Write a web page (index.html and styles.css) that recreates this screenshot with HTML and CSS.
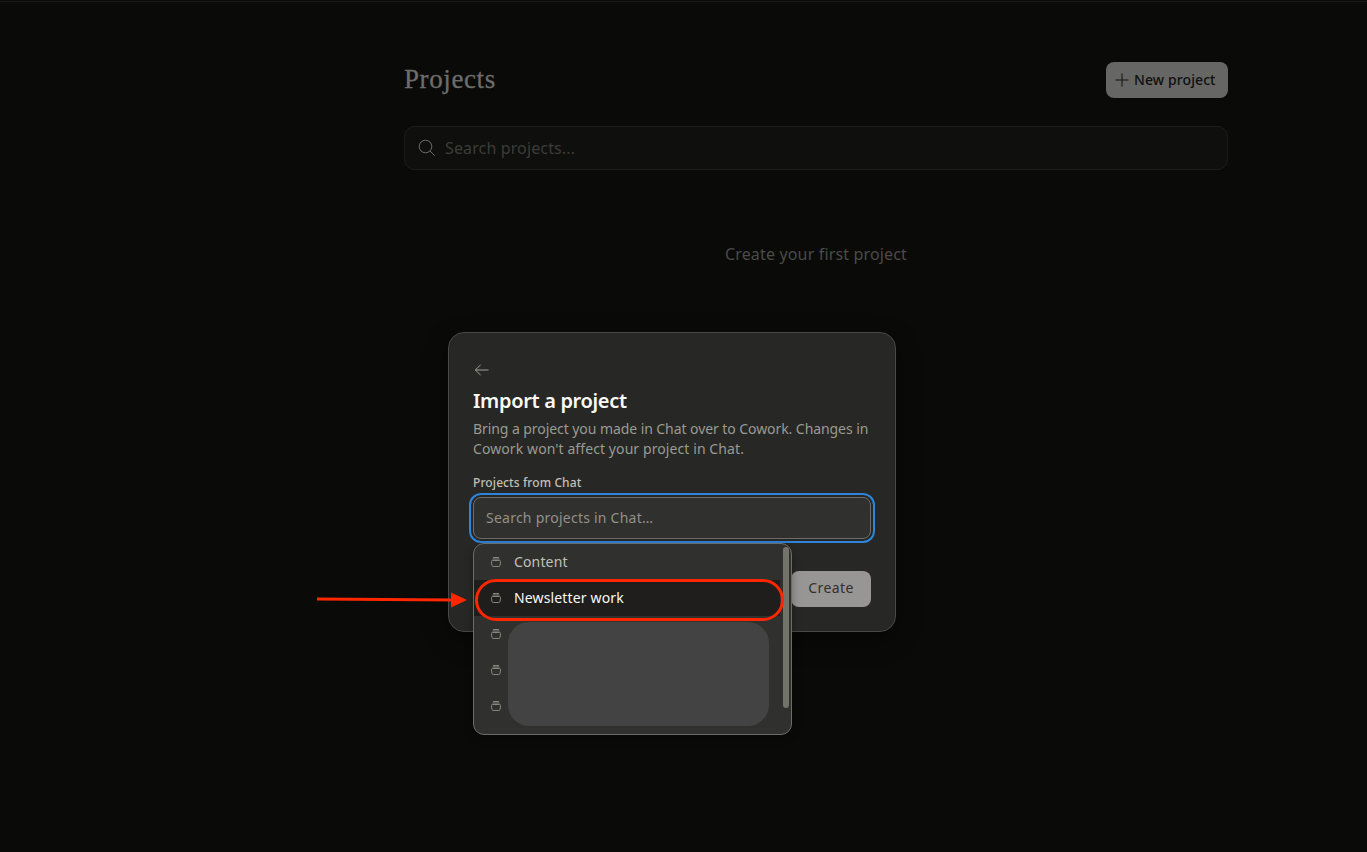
FILE: index.html
```html
<!DOCTYPE html>
<html lang="en">
<head>
  <meta charset="UTF-8" />
  <meta name="viewport" content="width=device-width, initial-scale=1.0"/>
  <title>Projects</title>
  <link rel="stylesheet" href="styles.css">
</head>
<body>
  <svg class="sprite" width="0" height="0">
    <symbol id="icon-project" viewBox="0 0 12 12">
      <path d="M3 1.5h6M2.5 3h7M2.5 4.5h7q1.1 0 1 1.1l-.4 3.6q-.1 1.3-1.4 1.3H3.3q-1.3 0-1.4-1.3l-.4-3.6q-.1-1.1 1-1.1z" />
    </symbol>
  </svg>

  <div class="topline"></div>
  <main class="page">
    <div class="page-header">
      <h1>Projects</h1>
      <button class="new-project">
        <svg width="14" height="14" viewBox="0 0 14 14"><path d="M7 .5v13M.5 7h13" /></svg>
        <span>New project</span>
      </button>
    </div>
    <div class="search">
      <svg width="18" height="18" viewBox="0 0 18 18"><circle cx="7.5" cy="7.5" r="6.3" /><path d="M12 12l4.8 4.8" /></svg>
      <span>Search projects...</span>
    </div>
    <p class="empty">Create your first project</p>
  </main>

  <div class="overlay">
    <div class="modal">
      <button class="back">
        <svg width="16" height="14" viewBox="0 0 16 14"><path d="M15.5 7H2.5M7.7 1.7L2.4 7L7.7 12.3" /></svg>
      </button>
      <h2>Import a project</h2>
      <p class="description"><span class="tight">Bring a project you made in Chat over to Cowork. Changes in</span><br><span class="loose">Cowork won't affect your project in Chat.</span></p>
      <div class="label">Projects from Chat</div>
      <div class="field">
        <div class="input">Search projects in Chat…</div>
        <div class="dropdown">
          <ul>
            <li><svg><use href="#icon-project" /></svg><span>Content</span></li>
            <li class="active"><svg><use href="#icon-project" /></svg><span>Newsletter work</span></li>
            <li><svg><use href="#icon-project" /></svg></li>
            <li><svg><use href="#icon-project" /></svg></li>
            <li><svg><use href="#icon-project" /></svg></li>
          </ul>
          <div class="scrollbar"></div>
          <div class="redacted"></div>
          <div class="highlight"></div>
        </div>
        <svg class="arrow" width="152" height="18" viewBox="0 0 152 18"><path class="shaft" d="M1 8L138 9" /><path class="head" d="M135 1.5L151 9L135 16.5z" /></svg>
      </div>
      <div class="actions">
        <button class="create">Create</button>
      </div>
    </div>
  </div>
</body>
</html>
```

FILE: styles.css
```css
:root {
  --bg: #0a0a08;
  --panel: #272725;
  --field: #30302e;
  --line: #6c6c68;
  --red: #ff2600;
}

* {
  box-sizing: border-box;
}

body {
  margin: 0;
  height: 852px;
  overflow: hidden;
  position: relative;
  background: var(--bg);
  font-family: "Noto Sans", sans-serif;
}

h1, h2, p, ul {
  margin: 0;
  padding: 0;
}

button {
  border: none;
  padding: 0;
  font-family: inherit;
}

svg {
  fill: none;
  stroke: currentColor;
  flex-shrink: 0;
}

.sprite {
  position: absolute;
}

.topline {
  height: 2px;
  border-bottom: 1px solid #1b1b19;
}

.page {
  width: 824px;
  margin-left: 404px;
  padding-top: 60px;
}

.page-header {
  display: flex;
  justify-content: space-between;
  align-items: center;
  height: 36px;
}

h1 {
  font-family: "Liberation Serif", serif;
  font-size: 27px;
  font-weight: 400;
  letter-spacing: 0.6px;
  line-height: 34px;
  padding-bottom: 2px;
  color: #6d6d6a;
  -webkit-text-stroke: 0.3px #6d6d6a;
}

.new-project {
  display: flex;
  align-items: center;
  gap: 5px;
  width: 122px;
  height: 36px;
  padding-left: 9px;
  border-radius: 8px;
  background: #666664;
  color: #10100f;
  font-size: 14px;
  font-weight: 500;
  letter-spacing: 0.1px;
  white-space: nowrap;
}

.new-project span {
  padding-bottom: 2px;
}

.search {
  display: flex;
  align-items: center;
  gap: 9px;
  height: 44px;
  margin-top: 28px;
  padding-left: 13px;
  border: 1px solid #1b1b19;
  border-radius: 10px;
  background: #0f0f0d;
  color: #3c3c39;
  font-size: 16px;
  letter-spacing: 0.13px;
}

.search svg {
  color: #6d6d69;
}

.empty {
  margin-top: 72px;
  text-align: center;
  font-size: 16px;
  line-height: 24px;
  letter-spacing: 0.16px;
  color: #4b4b48;
}

.overlay {
  position: absolute;
  top: 0;
  left: 0;
  padding: 332px 0 0 448px;
}

.modal {
  width: 448px;
  height: 300px;
  padding: 30px 24px 24px;
  border: 1px solid #484846;
  border-radius: 16px;
  background: var(--panel);
  box-shadow: 0 8px 24px rgba(0, 0, 0, 0.4);
}

.back {
  display: flex;
  background: none;
  color: #a3a29a;
}

h2 {
  margin-top: 11px;
  font-size: 20px;
  font-weight: 600;
  line-height: 26px;
  letter-spacing: -0.33px;
  color: #faf9f5;
}

.description {
  margin-top: 5px;
  font-size: 14px;
  line-height: 20px;
  color: #9b9a93;
  white-space: nowrap;
}

.tight {
  letter-spacing: -0.07px;
}

.loose {
  letter-spacing: 0.09px;
}

.label {
  margin-top: 15px;
  font-size: 12px;
  font-weight: 500;
  line-height: 18px;
  letter-spacing: 0.1px;
  color: #c2c0b6;
}

.field {
  position: relative;
  margin-top: 5px;
}

.input {
  height: 42px;
  padding-left: 12px;
  border: 1px solid var(--line);
  border-radius: 8px;
  outline: 2px solid #2c84db;
  outline-offset: 2px;
  background: var(--field);
  color: #92918a;
  font-size: 14px;
  line-height: 40px;
  letter-spacing: 0.24px;
}

.dropdown {
  position: absolute;
  top: 46px;
  left: 0;
  z-index: 1;
  width: 319px;
  height: 192px;
  border: 1px solid var(--line);
  border-radius: 11px;
  background: var(--field);
  box-shadow: 0 3px 8px rgba(0, 0, 0, 0.3);
}

.dropdown ul {
  width: 306px;
  list-style: none;
}

.dropdown li {
  display: flex;
  align-items: center;
  gap: 12px;
  height: 36px;
  padding-left: 16px;
  font-size: 14px;
  letter-spacing: 0.15px;
  color: #c2c0b6;
}

.dropdown li span {
  padding-bottom: 2px;
}

.dropdown li svg {
  width: 12px;
  height: 12px;
  color: #87867f;
}

.dropdown li.active {
  background: #1f1e1d;
  color: #faf9f5;
}

.scrollbar {
  position: absolute;
  top: 3px;
  right: 2px;
  width: 6px;
  height: 161px;
  border-radius: 3px;
  background: #73736b;
}

/* cover for the remaining project names */
.redacted {
  position: absolute;
  top: 78px;
  left: 34px;
  width: 261px;
  height: 104px;
  border-radius: 21px;
  background: #434343;
}

.highlight {
  position: absolute;
  top: 35px;
  left: 1px;
  width: 309px;
  height: 42px;
  border: 3px solid var(--red);
  border-radius: 21px;
}

.arrow {
  position: absolute;
  top: 94px;
  left: -157px;
  z-index: 2;
}

.shaft {
  stroke: var(--red);
  stroke-width: 3;
}

.head {
  fill: var(--red);
  stroke: none;
}

.actions {
  display: flex;
  justify-content: flex-end;
  margin-top: 32px;
}

.create {
  width: 80px;
  height: 36px;
  padding-bottom: 3px;
  border-radius: 8px;
  background: #979694;
  color: #30302e;
  font-size: 14px;
  letter-spacing: 0.4px;
}
```
